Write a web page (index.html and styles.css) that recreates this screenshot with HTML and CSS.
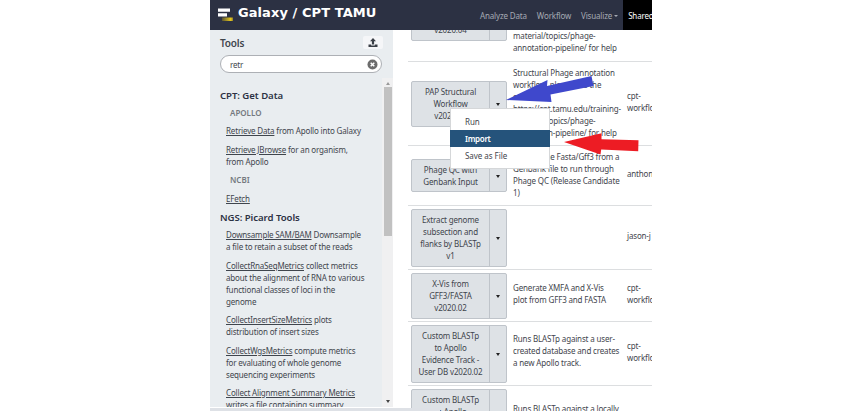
FILE: index.html
```
<!DOCTYPE html>
<html lang="en">
<head>
<meta charset="utf-8">
<title>Galaxy / CPT TAMU</title>
<link rel="stylesheet" href="styles.css">
</head>
<body>
<div class="app">
  <header class="masthead">
    <svg class="logo" width="16" height="16" viewBox="0 0 16 16"><defs><linearGradient id="g"><stop offset="0" stop-color="#5c5630"/><stop offset=".8" stop-color="#e8c81c"/><stop offset="1" stop-color="#8d7d2c"/></linearGradient></defs><path d="M1 1.500h12v3.200H1zM1 6.300h9v3.200H1z" fill="#fff"/><path d="M5 10.500h11v3.500H5z" fill="url(#g)"/></svg>
    <h1 class="brand">Galaxy / CPT TAMU</h1>
    <nav class="nav"><a>Analyze Data</a><a>Workflow</a><a class="has-caret">Visualize</a><a class="active">Shared</a></nav>
  </header>
  <div class="content">
    <aside class="tools">
      <div class="tools-head"><h2>Tools</h2><span class="upload"><svg width="10" height="10" viewBox="0 0 10 10"><path d="M5 0 8 3.2H6.1V6.5H3.9V3.2H2zM.5 6.4h2.700v1h3.600v-1h2.700v2.700H.5z" fill="#3a3f46"/></svg></span></div>
      <div class="search"><span>retr</span><svg width="11" height="11" viewBox="0 0 11 11"><circle cx="5.5" cy="5.5" r="5" fill="#6c6c6c"/><path d="m3.7 3.7 3.6 3.6m0-3.6L3.7 7.3" stroke="#fff" stroke-width="1.5"/></svg></div>
      <div class="scroller">
        <div class="list">
          <h3>CPT: Get Data</h3>
          <h4>APOLLO</h4>
          <p><a>Retrieve Data</a> from Apollo into Galaxy</p>
          <p><a>Retrieve JBrowse</a> for an organism,<br>from Apollo</p>
          <h4 class="ncbi">NCBI</h4>
          <p><a>EFetch</a></p>
          <h3 class="second">NGS: Picard Tools</h3>
          <p class="first"><a>Downsample SAM/BAM</a> Downsample<br>a file to retain a subset of the reads</p>
          <p><a>CollectRnaSeqMetrics</a> collect metrics<br>about the alignment of RNA to various<br>functional classes of loci in the<br>genome</p>
          <p><a>CollectInsertSizeMetrics</a> plots<br>distribution of insert sizes</p>
          <p><a>CollectWgsMetrics</a> compute metrics<br>for evaluating of whole genome<br>sequencing experiments</p>
          <p><a>Collect Alignment Summary Metrics</a><br>writes a file containing summary</p>
        </div>
        <div class="scrollbar"><i class="up"></i><i class="thumb"></i><i class="down"></i></div>
      </div>
    </aside>
    <main class="workflows">
      <div class="row r1"><div class="btn"><span>PAP Functional<br>Workflow<br>v2020.04</span><b></b></div><div class="desc">material/topics/phage-<br>annotation-pipeline/ for help</div><div class="owner"></div></div>
      <div class="row r2"><div class="btn"><span>PAP Structural<br>Workflow<br>v2020.04</span><b></b></div><div class="desc">Structural Phage annotation<br>workflow, please see the<br>course at<br>https://cpt.tamu.edu/training-<br>material/topics/phage-<br>annotation-pipeline/ for help</div><div class="owner">cpt-<br>workflows</div></div>
      <div class="row r3"><div class="btn"><span>Phage QC with<br>Genbank Input</span><b></b></div><div class="desc">Analyze the Fasta/Gff3 from a<br>Genbank file to run through<br>Phage QC (Release Candidate<br>1)</div><div class="owner">anthony</div></div>
      <div class="row r4"><div class="btn"><span>Extract genome<br>subsection and<br>flanks by BLASTp<br>v1</span><b></b></div><div class="desc"></div><div class="owner">jason-j</div></div>
      <div class="row r5"><div class="btn"><span>X-Vis from<br>GFF3/FASTA<br>v2020.02</span><b></b></div><div class="desc">Generate XMFA and X-Vis<br>plot from GFF3 and FASTA</div><div class="owner">cpt-<br>workflows</div></div>
      <div class="row r6"><div class="btn"><span>Custom BLASTp<br>to Apollo<br>Evidence Track -<br>User DB v2020.02</span><b></b></div><div class="desc">Runs BLASTp against a user-<br>created database and creates<br>a new Apollo track.</div><div class="owner">cpt-<br>workflows</div></div>
      <div class="row r7"><div class="btn"><span>Custom BLASTp<br>to Apollo<br>Evidence Track</span><b></b></div><div class="desc">Runs BLASTp against a locally</div><div class="owner"></div></div>
    </main>
  </div>
  <div class="menu"><a>Run</a><a class="selected">Import</a><a>Save as File</a></div>
  <div class="status"></div>
  <svg class="arrows" width="442" height="411" viewBox="210 0 442 411"><path d="m506 100 41.500-20-.5 6 44.500-10 2 10-43 8.500 1 7.500z" fill="#3f48cc"/><path d="m564 142 37.500-8.700v6l37 1-.3 11-37-1.800-.7 5z" fill="#ed1c24"/></svg>
</div>
</body>
</html>
```
FILE: styles.css
```
* { box-sizing: border-box; }
body { margin: 0; background: #fff; font: 8px/12px "Noto Sans", "Open Sans", sans-serif; color: #3f454d; }
h1, h2, h3, h4, p { margin: 0; }
.app { position: relative; width: 442px; height: 411px; margin-left: 210px; overflow: hidden; white-space: nowrap; letter-spacing: -.16px; }
.masthead { display: flex; height: 30px; background: #2c3143; color: #fff; }
.logo { margin: 7px 0 0 7px; flex: none; }
.brand { flex: none; margin-left: 5px; font: bold 13px/26px "DejaVu Sans", sans-serif; width: 142px; letter-spacing: .07px; }
.nav { display: flex; margin-left: 100px; line-height: 31px; color: #a5aab3; }
.nav a { flex: none; margin-right: 10px; }
.nav .has-caret { margin-right: 5px; }
.has-caret::after { content: ""; display: inline-block; margin-left: 2px; vertical-align: 2px; border: 2px solid transparent; border-top-color: currentColor; border-bottom: 0; }
.nav .active { background: #000; color: #fff; padding-left: 5px; margin: 0; width: 40px; }
.content { display: flex; height: 381px; }
.tools { flex: none; width: 183px; height: 377px; background: #e9edf0; display: flex; flex-direction: column; overflow: hidden; }
.tools-head { display: flex; justify-content: space-between; padding: 6px 10px 0; height: 25px; }
.tools-head h2 { font-size: 10px; line-height: 15px; font-weight: 600; }
.upload { width: 20px; height: 13px; border-radius: 2px; background: #f5f6f8; display: flex; align-items: center; justify-content: center; }
.search { height: 18px; margin: 0 11px 0 10px; border: 1px solid #adb0b5; border-radius: 9px; background: #fff; display: flex; align-items: center; justify-content: space-between; padding: 0 3px 0 9px; }
.search span { padding-top: 1px; }
.scroller { display: flex; margin-top: 5px; height: 329px; }
.list { width: 172px; padding: 11px 0 0 10px; overflow: hidden; }
.list h3 { font-size: 9.6px; line-height: 13px; font-weight: 600; color: #2c3143; letter-spacing: -.05px; }
.list h4 { margin: 4.5px 0 6.5px 10px; font-weight: 600; color: #74797f; font-size: 8px; letter-spacing: 0; }
.list p { margin: 0 0 6.500px 6px; }
.list a { text-decoration: underline; }
.list .ncbi { margin-top: 5.5px; }
.list .second { margin-top: 6.5px; }
.list .first { margin-top: 5px; }
.scrollbar { width: 11px; background: #f0f0f1; display: flex; flex-direction: column; align-items: center; padding: 4px 0; }
.scrollbar i { flex: none; }
.up { border: 2.5px solid transparent; border-bottom: 3px solid #999; border-top: 0; }
.thumb { width: 8px; height: 149px; margin-top: 2px; background: #c1c1c1; }
.down { border: 2.5px solid transparent; border-top: 3px solid #444; border-bottom: 0; margin-top: auto; }
.workflows { flex: 1; margin-left: 15px; overflow: hidden; }
.row { display: grid; grid-template-columns: 96px 120px 60px; align-items: center; border-bottom: 1px solid #dcdee0; padding-left: 3px; }
.desc { padding-left: 6px; }
.btn { display: flex; border: 1px solid #bfc4ca; border-radius: 2px; background: #dee2e6; text-align: center; }
.btn span { width: 78px; padding: 4px 0; border-right: 1px solid #bfc4ca; }
.btn b { flex: 1; align-self: center; }
.btn b::before { content: ""; display: inline-block; vertical-align: middle; border: 2.5px solid transparent; border-top: 3px solid #222; border-bottom: 0; }
.r1 { height: 67px; margin-top: -35px; align-items: start; }
.r1 .desc { padding-top: 35px; }
.r2 { height: 84px; }
.r2 .desc { position: relative; top: -1px; }
.r2 .owner, .r3 .owner { position: relative; top: -2px; }
.r3 { height: 60px; }
.r3 .desc { position: relative; top: -1px; }
.r3 .btn span { padding-bottom: 3px; }
.r4 { height: 64px; }
.r4 .owner, .r6 .owner, .r5 .owner, .r5 .desc { position: relative; top: -1.500px; }
.r5 { height: 52px; }
.r6 { height: 64px; }
.r6 .desc { position: relative; top: -3px; }
.r7 { height: 52px; }
.r7 .desc { position: relative; top: -3px; }
.menu { position: absolute; left: 240px; top: 108px; width: 100px; height: 61px; background: #fff; border: 1px solid #d5d7d9; padding: 4px 0; letter-spacing: -.05px; }
.menu a { display: block; height: 17px; line-height: 17px; padding-left: 14px; }
.menu .selected { background: #25537b; color: #fff; margin: 0 -1px; padding-left: 15px; font-weight: 600; letter-spacing: -.3px; }
.status { position: absolute; left: 0; bottom: 0; width: 230px; height: 3px; background: #dee1e6; border-top-right-radius: 2px; }
.arrows { position: absolute; left: 0; top: 0; }
```
